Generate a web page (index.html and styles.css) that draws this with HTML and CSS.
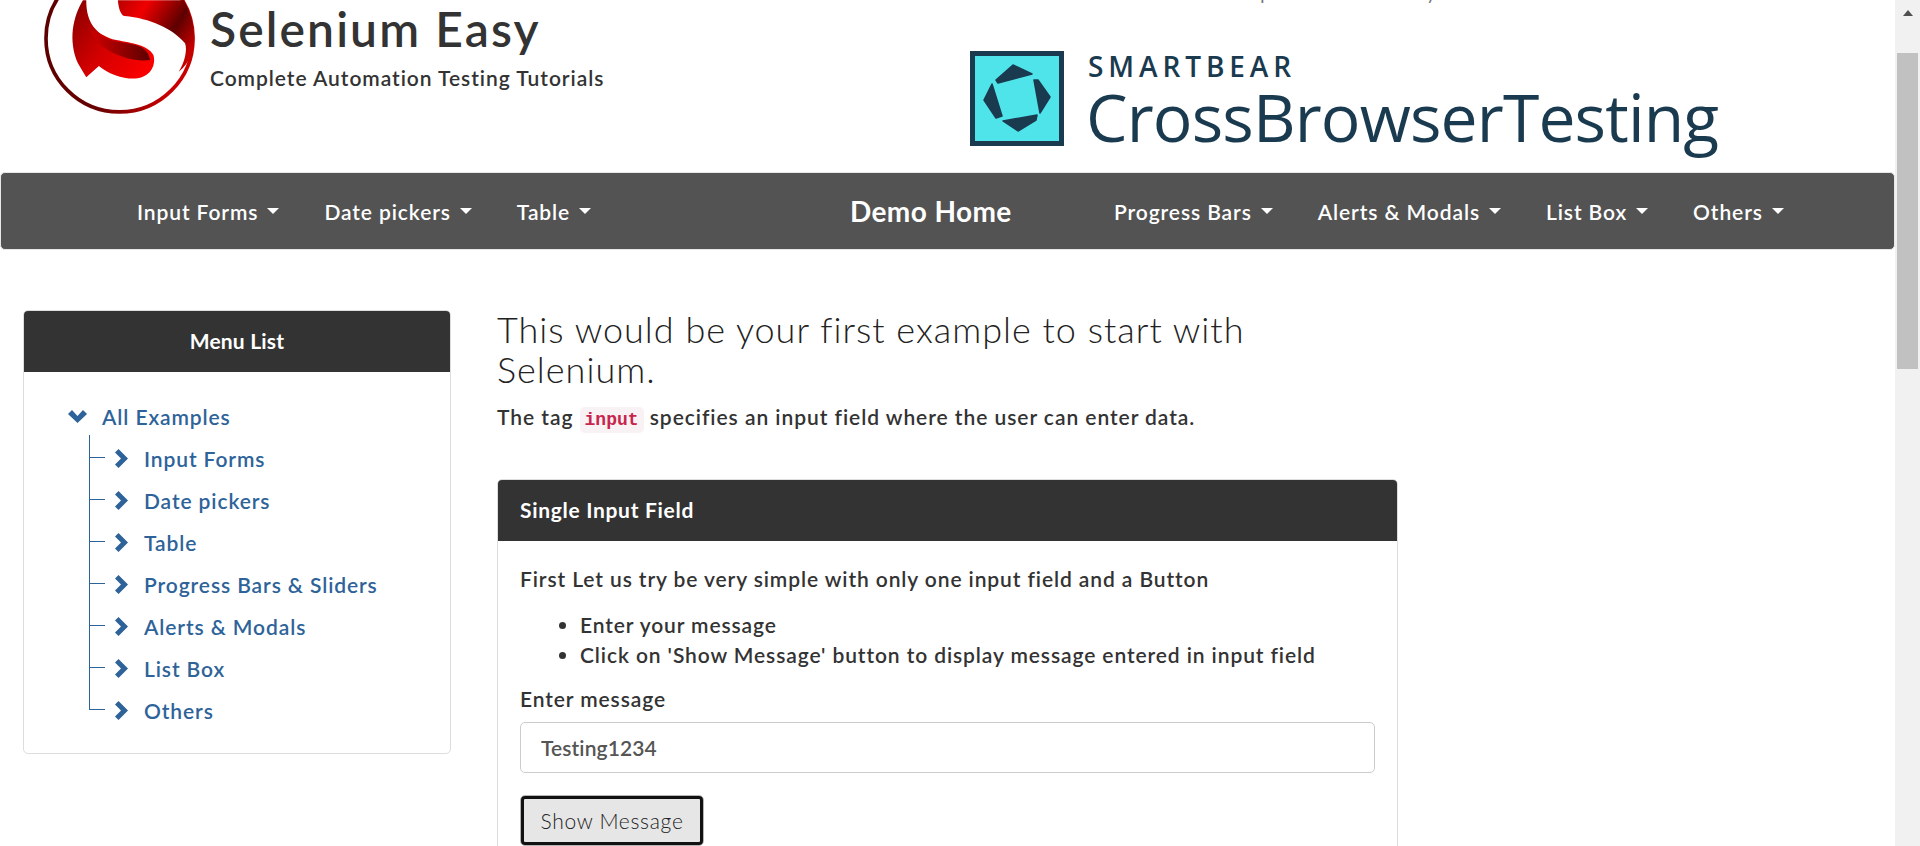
FILE: index.html
```html
<!DOCTYPE html>
<html lang="en">
<head>
<meta charset="utf-8">
<title>Selenium Easy</title>
<link rel="stylesheet" href="styles.css">
</head>
<body>
<div class="viewport">
  <div class="page">
    <header class="masthead">
      <div class="brand">
        <svg class="logo" viewBox="70 0 460 345" aria-hidden="true">
          <defs>
            <linearGradient id="ring" x1="0" y1="0" x2="1" y2="0.3">
              <stop offset="0" stop-color="#5a0000"/>
              <stop offset="0.6" stop-color="#6a0000"/>
              <stop offset="1" stop-color="#c80000"/>
            </linearGradient>
            <linearGradient id="lobe" x1="0" y1="0" x2="1" y2="0.7">
              <stop offset="0" stop-color="#850000"/>
              <stop offset="0.55" stop-color="#d40000"/>
              <stop offset="1" stop-color="#f80000"/>
            </linearGradient>
            <linearGradient id="fold" x1="0" y1="0" x2="1" y2="0">
              <stop offset="0" stop-color="#d00000"/>
              <stop offset="1" stop-color="#5c0000"/>
            </linearGradient>
            <linearGradient id="top" x1="0" y1="0" x2="1" y2="0.6">
              <stop offset="0" stop-color="#b80000"/>
              <stop offset="0.3" stop-color="#f00000"/>
              <stop offset="0.72" stop-color="#5e0000"/>
              <stop offset="1" stop-color="#c40000"/>
            </linearGradient>
          </defs>
          <circle cx="300" cy="115" r="221" fill="none" stroke="url(#ring)" stroke-width="11"/>
          <path fill="url(#lobe)" d="M190 0C160 50 145 120 175 190L200 232L238 198C270 225 320 240 355 235C395 228 410 195 402 165C385 135 340 130 290 120C230 105 200 70 200 0Z"/>
          <path fill="url(#fold)" d="M215 92C240 112 270 122 320 130C360 135 385 145 392 180C350 186 290 170 250 140C232 126 222 110 215 92Z"/>
          <path fill="url(#top)" d="M295 0C298 30 305 45 316 48C390 55 460 85 497 130C505 150 495 190 478 215C510 190 525 150 525 115C525 70 510 30 493 0Z"/>
        </svg>
        <div class="brand-text">
          <h1 class="brand-name">Selenium Easy</h1>
          <p class="brand-tag">Complete Automation Testing Tutorials</p>
        </div>
      </div>
      <div class="sponsor">
        <p class="sponsor-note">Sponsored by</p>
        <div class="cbt">
          <svg class="cbt-mark" viewBox="0 0 94 95" aria-hidden="true">
            <rect x="2.5" y="2.5" width="89" height="90" fill="#4fe3ea" stroke="#1a3a4f" stroke-width="5"/>
            <path fill="#1a3a4f" stroke="#1a3a4f" stroke-width="1.5" stroke-linejoin="round" d="M43 14L62 23L28 32L26 29ZM22 33L32 65L26 67L14 49ZM64 29L68 29L80 46L70 62ZM67 64L66 69L48 80L33 70Z"/>
          </svg>
          <div class="cbt-text">
            <span class="cbt-small">SMARTBEAR</span>
            <span class="cbt-big">CrossBrowserTesting</span>
          </div>
        </div>
      </div>
    </header>

    <nav class="navbar">
      <ul class="nav-group nav-left">
        <li class="nav-item">Input Forms <span class="caret"></span></li>
        <li class="nav-item">Date pickers <span class="caret"></span></li>
        <li class="nav-item">Table <span class="caret"></span></li>
      </ul>
      <div class="nav-home">Demo Home</div>
      <ul class="nav-group nav-right">
        <li class="nav-item">Progress Bars <span class="caret"></span></li>
        <li class="nav-item">Alerts &amp; Modals <span class="caret"></span></li>
        <li class="nav-item">List Box <span class="caret"></span></li>
        <li class="nav-item">Others <span class="caret"></span></li>
      </ul>
    </nav>

    <main class="content">
      <aside class="menu">
        <div class="menu-head">Menu List</div>
        <div class="menu-body">
          <div class="tree-root">
            <svg class="chev-down" viewBox="0 0 19 13" aria-hidden="true"><polygon points="0,4 4,0 9.5,6 15,0 19,4 9.5,13" fill="#2e6399"/></svg>
            <span>All Examples</span>
          </div>
          <ul class="tree">
            <li class="tree-item"><svg class="chev" viewBox="0 0 13 19"><polygon points="0,3.5 3.5,0 13,9.5 3.5,19 0,15.5 6,9.5" fill="#2e6399"/></svg><span>Input Forms</span></li>
            <li class="tree-item"><svg class="chev" viewBox="0 0 13 19"><polygon points="0,3.5 3.5,0 13,9.5 3.5,19 0,15.5 6,9.5" fill="#2e6399"/></svg><span>Date pickers</span></li>
            <li class="tree-item"><svg class="chev" viewBox="0 0 13 19"><polygon points="0,3.5 3.5,0 13,9.5 3.5,19 0,15.5 6,9.5" fill="#2e6399"/></svg><span>Table</span></li>
            <li class="tree-item"><svg class="chev" viewBox="0 0 13 19"><polygon points="0,3.5 3.5,0 13,9.5 3.5,19 0,15.5 6,9.5" fill="#2e6399"/></svg><span>Progress Bars &amp; Sliders</span></li>
            <li class="tree-item"><svg class="chev" viewBox="0 0 13 19"><polygon points="0,3.5 3.5,0 13,9.5 3.5,19 0,15.5 6,9.5" fill="#2e6399"/></svg><span>Alerts &amp; Modals</span></li>
            <li class="tree-item"><svg class="chev" viewBox="0 0 13 19"><polygon points="0,3.5 3.5,0 13,9.5 3.5,19 0,15.5 6,9.5" fill="#2e6399"/></svg><span>List Box</span></li>
            <li class="tree-item"><svg class="chev" viewBox="0 0 13 19"><polygon points="0,3.5 3.5,0 13,9.5 3.5,19 0,15.5 6,9.5" fill="#2e6399"/></svg><span>Others</span></li>
          </ul>
        </div>
      </aside>

      <section class="example">
        <h3 class="example-title">This would be your first example to start with Selenium.</h3>
        <p class="example-lead">The tag <code class="tag">input</code> specifies an input field where the user can enter data.</p>
        <div class="panel">
          <div class="panel-head">Single Input Field</div>
          <div class="panel-body">
            <p class="panel-intro">First Let us try be very simple with only one input field and a Button</p>
            <ul class="panel-list">
              <li>Enter your message</li>
              <li>Click on 'Show Message' button to display message entered in input field</li>
            </ul>
            <label class="field-label" for="msg">Enter message</label>
            <input class="field" id="msg" type="text" value="Testing1234">
            <button class="btn" type="button">Show Message</button>
          </div>
        </div>
      </section>
    </main>
  </div>
  <div class="scrollbar">
    <div class="scroll-up"></div>
    <div class="scroll-thumb"></div>
  </div>
</div>
</body>
</html>
```
FILE: styles.css
```css
* { box-sizing: border-box; }
html, body { margin: 0; height: 100%; overflow: hidden; background: #fff; }
body { font-family: Lato, "Noto Sans", sans-serif; color: #333; font-size: 21px; font-weight: 600; letter-spacing: .9px; }
p, h1, h3, ul { margin: 0; padding: 0; }
ul { list-style: none; }

.viewport { display: flex; height: 846px; overflow: hidden; }
.page { flex: 1; min-width: 0; overflow: hidden; }

.scrollbar { width: 25px; background: #f1f1f1; display: flex; flex-direction: column; align-items: center; }
.scroll-up { margin-top: 10px; width: 0; height: 0; border-left: 5.5px solid transparent; border-right: 5.5px solid transparent; border-bottom: 6px solid #505050; }
.scroll-thumb { margin-top: 37px; width: 21px; height: 316px; background: #c1c1c1; }

.masthead { height: 172px; display: flex; }
.brand { width: 970px; padding-left: 43px; display: flex; gap: 14px; align-items: flex-start; }
.logo { width: 153px; height: 115px; flex: none; }
.brand-name { font-size: 48px; font-weight: 600; line-height: 58px; letter-spacing: 2.1px; color: #333; }
.brand-tag { font-size: 21px; font-weight: 600; line-height: 24px; margin-top: 8px; letter-spacing: .95px; color: #333; }

.sponsor { flex: 1; position: relative; }
.sponsor-note { position: absolute; top: -36px; left: 271px; font-size: 34px; font-weight: 300; line-height: 40px; letter-spacing: 0; color: #777; white-space: nowrap; }
.cbt { display: flex; gap: 24px; padding-top: 51px; }
.cbt-mark { width: 94px; height: 95px; flex: none; }
.cbt-text { display: flex; flex-direction: column; font-family: "Open Sans", sans-serif; color: #1a3a4f; }
.cbt-small { font-size: 28px; font-weight: 600; line-height: 28px; letter-spacing: 4.9px; margin-top: 1px; }
.cbt-big { font-size: 66px; font-weight: 400; line-height: 68px; letter-spacing: -.85px; margin: 2px 0 0 -2px; white-space: nowrap; }

.navbar { height: 78px; background: #535353; border: 1px solid #e7e7e7; border-radius: 5px; display: flex; align-items: center; color: #fff; }
.nav-group { display: flex; }
.nav-left { padding-left: 136px; gap: 45px; width: 849px; }
.nav-home { width: 264px; font-size: 28px; font-weight: 700; letter-spacing: .4px; }
.nav-right { gap: 45px; }
.nav-item { white-space: nowrap; display: flex; align-items: center; gap: 9px; }
.caret { width: 0; height: 0; border-left: 6px solid transparent; border-right: 6px solid transparent; border-top: 6px solid #fff; }

.content { display: flex; padding: 60px 0 0 23px; align-items: flex-start; }

.menu { width: 428px; flex: none; border: 1px solid #ddd; border-radius: 5px; height: 444px; overflow: hidden; }
.menu-head { margin: -1px -1px 0; height: 62px; line-height: 62px; text-align: center; background: #333; color: #fff; letter-spacing: .2px; font-weight: 700; }
.menu-body { padding: 23px 0 0 44px; color: #2e6399; }
.tree-root { display: flex; align-items: center; height: 42px; gap: 15px; }
.chev-down { width: 19px; height: 13px; flex: none; }
.tree { margin-left: 21px; }
.tree-item { position: relative; display: flex; align-items: center; height: 42px; padding-left: 25px; gap: 16px; border-left: 1px solid #2e6399; }
.tree-item:last-child { border-left-color: transparent; }
.tree-item::before { content: ""; position: absolute; left: -1px; top: -2px; width: 15px; height: 22px; border-left: 1px solid #2e6399; border-bottom: 1px solid #2e6399; }
.chev { width: 13px; height: 19px; flex: none; }

.example { width: 901px; margin-left: 46px; }
.example-title { font-size: 36px; font-weight: 300; line-height: 39.6px; letter-spacing: 1px; color: #222; width: 780px; }
.example-lead { margin-top: 14px; line-height: 28px; letter-spacing: .95px; }
.tag { font-family: "Liberation Mono", monospace; font-size: 18px; font-weight: 700; color: #c7254e; background: #f9f2f4; border-radius: 5px; padding: 3px 5px; letter-spacing: 0; }

.panel { margin-top: 45px; border: 1px solid #ddd; border-radius: 5px; overflow: hidden; height: 420px; }
.panel-head { margin: -1px -1px 0; height: 62px; line-height: 62px; padding-left: 23px; background: #333; color: #fff; font-weight: 700; letter-spacing: .7px; }
.panel-body { padding: 0 22px; }
.panel-intro { padding-top: 24px; line-height: 28px; }
.panel-list { list-style: disc; padding-left: 60px; margin-top: 17px; line-height: 30px; }
.field-label { display: block; margin-top: 14px; line-height: 30px; }
.field { display: block; width: 100%; height: 51px; margin-top: 8px; border: 1px solid #ccc; border-radius: 5px; padding: 0 20px; font: 600 21px Lato, sans-serif; letter-spacing: .1px; color: #555; background: #fff; }
.btn { display: block; margin-top: 22px; width: 184px; height: 51px; background: #e6e6e6; border: 1px solid #b5b5b5; outline: 3px solid #111; outline-offset: -4px; border-radius: 5px; font: 300 21px Lato, sans-serif; letter-spacing: .7px; color: #222; padding: 0; }
```
